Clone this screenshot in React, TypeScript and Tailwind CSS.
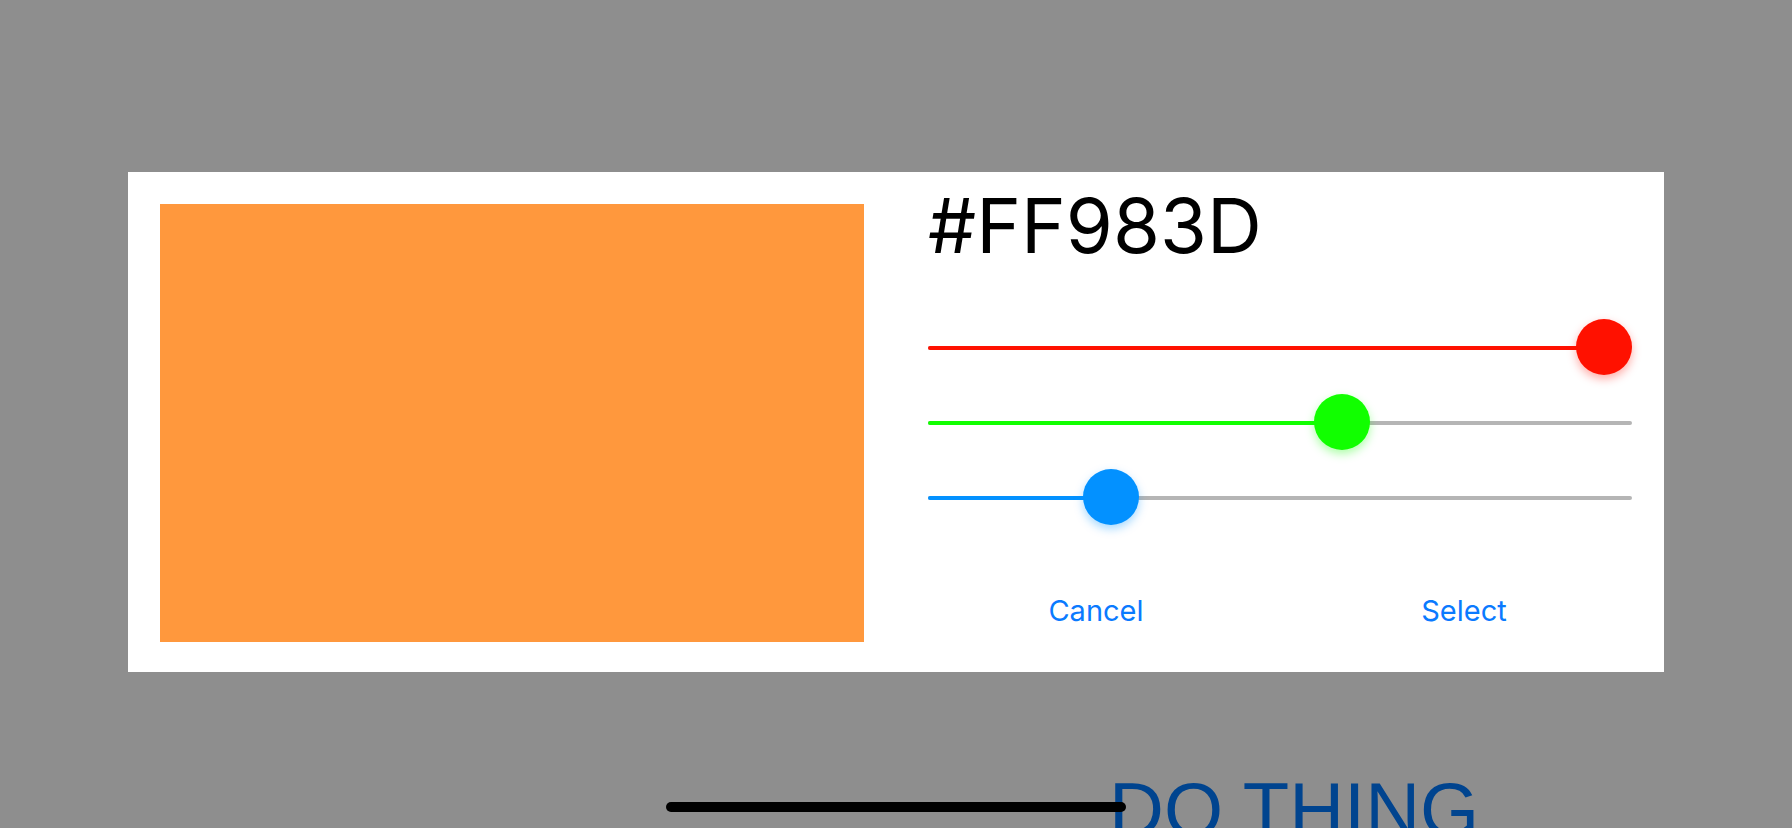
import React from 'react';

interface ChannelSliderProps {
    value: number;
    fill: string;
    thumb: string;
}

// thumb travels 648px: track is 704 wide, thumb is 56
function ChannelSlider({ value, fill, thumb }: ChannelSliderProps) {
    const left = Math.round(value * 648);
    return (
        <div className="relative h-14 w-[704px]">
            <div className="absolute left-0 right-0 top-[27px] h-1 rounded-full bg-[#b5b5b5]" />
            <div className={`absolute left-0 top-[27px] h-1 rounded-full ${fill}`} style={{ width: left + 28 }} />
            <div className={`absolute top-0 h-14 w-14 rounded-full ${thumb}`} style={{ left }} />
        </div>
    );
}

export default function App() {
    const r = 0xff / 255;
    const g = 0x98 / 255;
    const b = 0x3d / 255;

    return (
        <div
            className="relative h-[828px] w-full overflow-hidden bg-[#8e8e8e]"
            style={{ fontFamily: 'Inter, "Noto Sans", sans-serif' }}
        >
            <div className="mx-auto mt-[172px] flex h-[500px] w-[1536px] bg-white">
                <div className="ml-8 mt-8 h-[438px] w-[704px] bg-[#ff983d]" />
                <div className="flex flex-1 flex-col pl-16 pr-8 pt-[15px]">
                    <div className="text-[76px] leading-none text-black">#FF983D</div>
                    <div className="mt-[56px] flex flex-col gap-[19px]">
                        <ChannelSlider
                            value={r}
                            fill="bg-[#ff1100]"
                            thumb="bg-[#ff1100] shadow-[0_4px_10px_rgba(255,17,0,0.35)]"
                        />
                        <ChannelSlider
                            value={g}
                            fill="bg-[#11ff00]"
                            thumb="bg-[#11ff00] shadow-[0_4px_10px_rgba(17,255,0,0.35)]"
                        />
                        <ChannelSlider
                            value={b}
                            fill="bg-[#0391ff]"
                            thumb="bg-[#0391ff] shadow-[0_4px_10px_rgba(3,145,255,0.35)]"
                        />
                    </div>
                    <div className="-mx-4 mt-[71px] flex text-[29px] leading-none text-[#0a7aff]">
                        <button className="flex-1 text-center">Cancel</button>
                        <button className="flex-1 text-center">Select</button>
                    </div>
                </div>
            </div>

            <div
                className="ml-[1109px] mt-[100px] text-[76px] leading-none whitespace-nowrap text-[#00448f]"
                style={{ fontFamily: '"Liberation Sans", Arial, sans-serif' }}
            >
                DO THING
            </div>

            <div className="absolute left-[666px] top-[802px] h-[10px] w-[460px] rounded-full bg-black" />
        </div>
    );
}
